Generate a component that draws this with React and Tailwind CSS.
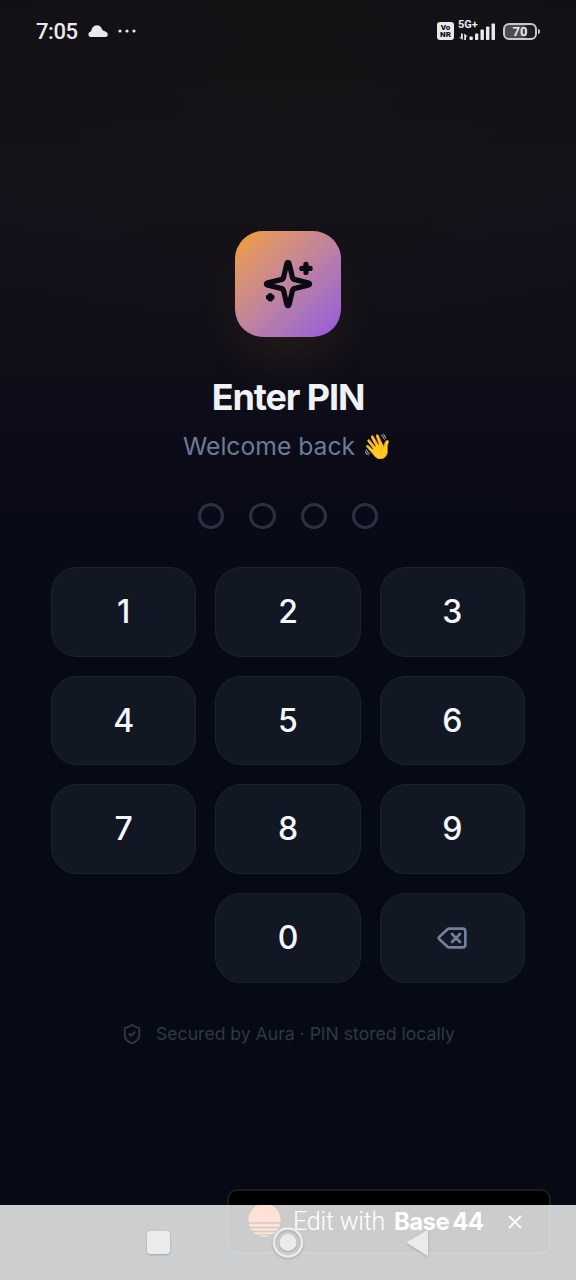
import React, { useState } from "react";
import { Delete, ShieldCheck, X } from "lucide-react";

const KEYS = ["1", "2", "3", "4", "5", "6", "7", "8", "9", "", "0", "del"];
const PIN_LENGTH = 4;

const StatusBar = () => (
  <div className="flex h-[62px] items-center justify-between pl-9 pr-[36px] text-[#e9e9ea]">
    <div className="flex items-center">
      <span className="w-[42px] whitespace-nowrap pt-0.5 font-['Roboto',sans-serif] text-[22px] leading-6 font-medium tracking-[-0.400px]">7:05</span>
      <svg className="ml-2.5 h-3 w-5" viewBox="0 0 20 12" fill="currentColor">
        <path d="M3.600 12C1.600 12 .4 11 .4 9.400c0-1.500 1.100-2.600 2.700-2.900C3.700 3 5.700.5 8.800.3c2.600 0 4.300 1.500 5.200 3.900.4.9 1.200 1.400 2.400 1.900 2.100.9 3.400 1.900 3.400 3.700 0 1.400-1.100 2.200-2.600 2.200z" />
      </svg>
      <svg className="ml-2.5 h-1 w-[18px]" viewBox="0 0 18 4" fill="currentColor">
        <circle cx="2" cy="2" r="1.6" />
        <circle cx="9" cy="2" r="1.6" />
        <circle cx="16" cy="2" r="1.6" />
      </svg>
    </div>

    <div className="flex items-center">
      <div className="flex h-[18px] w-[17px] flex-col items-center justify-center rounded-[3px] bg-[#e9e9ea] font-['Roboto',sans-serif] text-[8px] leading-[7.500px] font-black text-[#111116]">
        <span>Vo</span>
        <span>NR</span>
      </div>
      <div className="relative ml-1 h-[19px] w-[38px]">
        <span className="absolute -top-[2px] left-0 font-['Roboto',sans-serif] text-[11px] leading-[10px] font-bold">5G+</span>
        <svg className="h-[19px] w-[38px]" viewBox="0 0 38 19" fill="currentColor">
          <path d="M3 11.500h1.800v6.500L1 15.200h2zM6.200 18v-6.500l3.600 3H8V18z" />
          <rect x="11.500" y="14.500" width="3.300" height="3.500" rx=".8" />
          <rect x="17" y="11.500" width="3.300" height="6.500" rx=".8" />
          <rect x="22.500" y="7.500" width="3.400" height="10.500" rx=".8" />
          <rect x="28" y="4.500" width="3.400" height="13.500" rx=".8" />
          <rect x="33.500" y="1.500" width="3.500" height="16.500" rx=".8" />
        </svg>
      </div>
      <div className="ml-[7px] flex h-[17px] w-[34px] items-center justify-center rounded-[6px] border-2 border-[#c9c9cb] bg-linear-to-r from-[#4d4d50] from-60% to-[#1d1d22] to-75% font-['Roboto',sans-serif] text-[13px] leading-none font-bold">
        70
      </div>
      <div className="ml-px h-[5px] w-[2px] rounded-r bg-[#c9c9cb]" />
    </div>
  </div>
);

const Sparkles = () => (
  <svg
    className="size-[52px]"
    viewBox="0 0 24 24"
    fill="none"
    stroke="#0a0a14"
    strokeWidth="2.400"
    strokeLinecap="round"
    strokeLinejoin="round"
  >
    <path d="M10.100 15.700A2 2 0 0 0 8.300 13.900l-5.935-1.419a.5.5 0 0 1 0-.962L8.300 10.100A2 2 0 0 0 10.100 8.300l1.419-5.935a.5.5 0 0 1 .963 0L13.900 8.300A2 2 0 0 0 15.700 10.100l5.935 1.419a.5.5 0 0 1 0 .964L15.700 13.900a2 2 0 0 0-1.800 1.800l-1.418 5.935a.5.5 0 0 1-.963 0z" />
    <path d="M20.300 2.900v3.800M22.200 4.800h-3.800M3.800 17.300v1.600M4.600 18.100H3" />
  </svg>
);

const EditBadge = () => (
  <div className="absolute top-[1189px] left-[227px] flex h-[65px] w-[324px] items-center rounded-[10px] border-2 border-[#1c1c1e] bg-black pl-[19px] text-white">
    <svg className="size-[33px]" viewBox="0 0 33 33">
      <path d="M.7 17.300a16 16 0 1 1 31.600 0z" fill="#ff6a2b" />
      <path d="M.9 18.800h31.200l-.7 3H1.600zM2.400 23.300h28.200l-1.500 2.500H3.900zM5.200 27.200h22.600l-2.500 2H7.700zM10 30.500h13a16 16 0 0 1-13 0z" fill="#ff6a2b" />
    </svg>
    <span className="ml-3 w-[93px] whitespace-nowrap font-['Roboto',sans-serif] text-[25px] font-light tracking-[-0.200px]">Edit with</span>
    <span className="ml-2 w-[92px] whitespace-nowrap font-['Inter',sans-serif] text-[24px] font-bold tracking-[-0.600px] [word-spacing:-2px]">Base 44</span>
    <X className="ml-[18px] size-[22px]" strokeWidth={2} />
  </div>
);

const NavigationBar = () => (
  <div className="absolute inset-x-0 bottom-0 h-[75px] bg-white/80">
    <svg className="h-[75px] w-full" viewBox="0 0 576 75">
      <g className="drop-shadow-[0_1px_1px_rgba(0,0,0,0.2)]">
        <rect x="147" y="26" width="23" height="23" rx="4" fill="#ebebeb" />
        <circle cx="288" cy="37.500" r="14" fill="none" stroke="#ebebeb" strokeWidth="2.500" />
        <circle cx="288" cy="37.500" r="8.500" fill="#ebebeb" />
        <path d="M407 37.500 427.500 25.500v25z" fill="#ebebeb" stroke="#ebebeb" strokeLinejoin="round" />
      </g>
    </svg>
  </div>
);

const App = () => {
  const [pin, setPin] = useState("");

  const handlePress = (key) => {
    if (key === "del") {
      setPin(pin.slice(0, -1));
    } else if (pin.length < PIN_LENGTH) {
      setPin(pin + key);
    }
  };

  return (
    <div className="relative h-[1280px] w-[576px] overflow-hidden bg-[#060a14] bg-[radial-gradient(ellipse_380px_330px_at_50%_70px,rgba(23,19,20,0.6),transparent),linear-gradient(to_bottom,#101015_0px,#14131b_190px,#0f0e19_360px,#090a17_520px,#060a14_700px)] font-['Inter',sans-serif]">
      <StatusBar />

      <main className="flex flex-col items-center pt-[169px]">
        <div className="flex size-[106px] items-center justify-center rounded-[28px] bg-linear-to-br from-[#f59e1f] to-[#9455e0] shadow-[0_26px_50px_-6px_rgba(245,158,11,0.09)]">
          <Sparkles />
        </div>

        <h1 className="mt-[38px] whitespace-nowrap text-[36px] leading-[44px] font-bold tracking-[-1.100px] text-[#f1f2f6]">Enter PIN</h1>
        <p className="mt-[7px] flex h-[42px] items-center whitespace-nowrap text-[24.700px] text-[#6b7b95]">Welcome back 👋</p>

        <div className="mt-[34.500px] flex gap-[25px]">
          {Array.from({ length: PIN_LENGTH }).map((_, i) => (
            <span
              key={i}
              className={`size-[26.400px] rounded-full border-[3px] ${i < pin.length ? "border-[#f59e1f] bg-[#f59e1f]" : "border-[#2a3240]"}`}
            />
          ))}
        </div>

        <div className="mt-[38px] grid w-[474px] grid-cols-3 gap-[19px]">
          {KEYS.map((key, i) =>
            key === "" ? (
              <div key={i} />
            ) : (
              <button
                key={i}
                onClick={() => handlePress(key)}
                className="flex h-[89.800px] items-center justify-center rounded-[26px] border-[1.600px] border-[#1d222d] bg-[#121724] text-[32px] font-medium text-[#f4f6fb]"
              >
                {key === "del" ? <Delete className="size-8 text-[#71819c]" strokeWidth={2} /> : key}
              </button>
            )
          )}
        </div>

        <div className="mt-[39.500px] flex items-center gap-[13px] text-[#303746]">
          <ShieldCheck className="size-[22px]" strokeWidth={2} />
          <span className="-mt-px whitespace-nowrap text-[17.600px] leading-6">Secured by Aura · PIN stored locally</span>
        </div>
      </main>

      <EditBadge />
      <NavigationBar />
    </div>
  );
};

export default App;
